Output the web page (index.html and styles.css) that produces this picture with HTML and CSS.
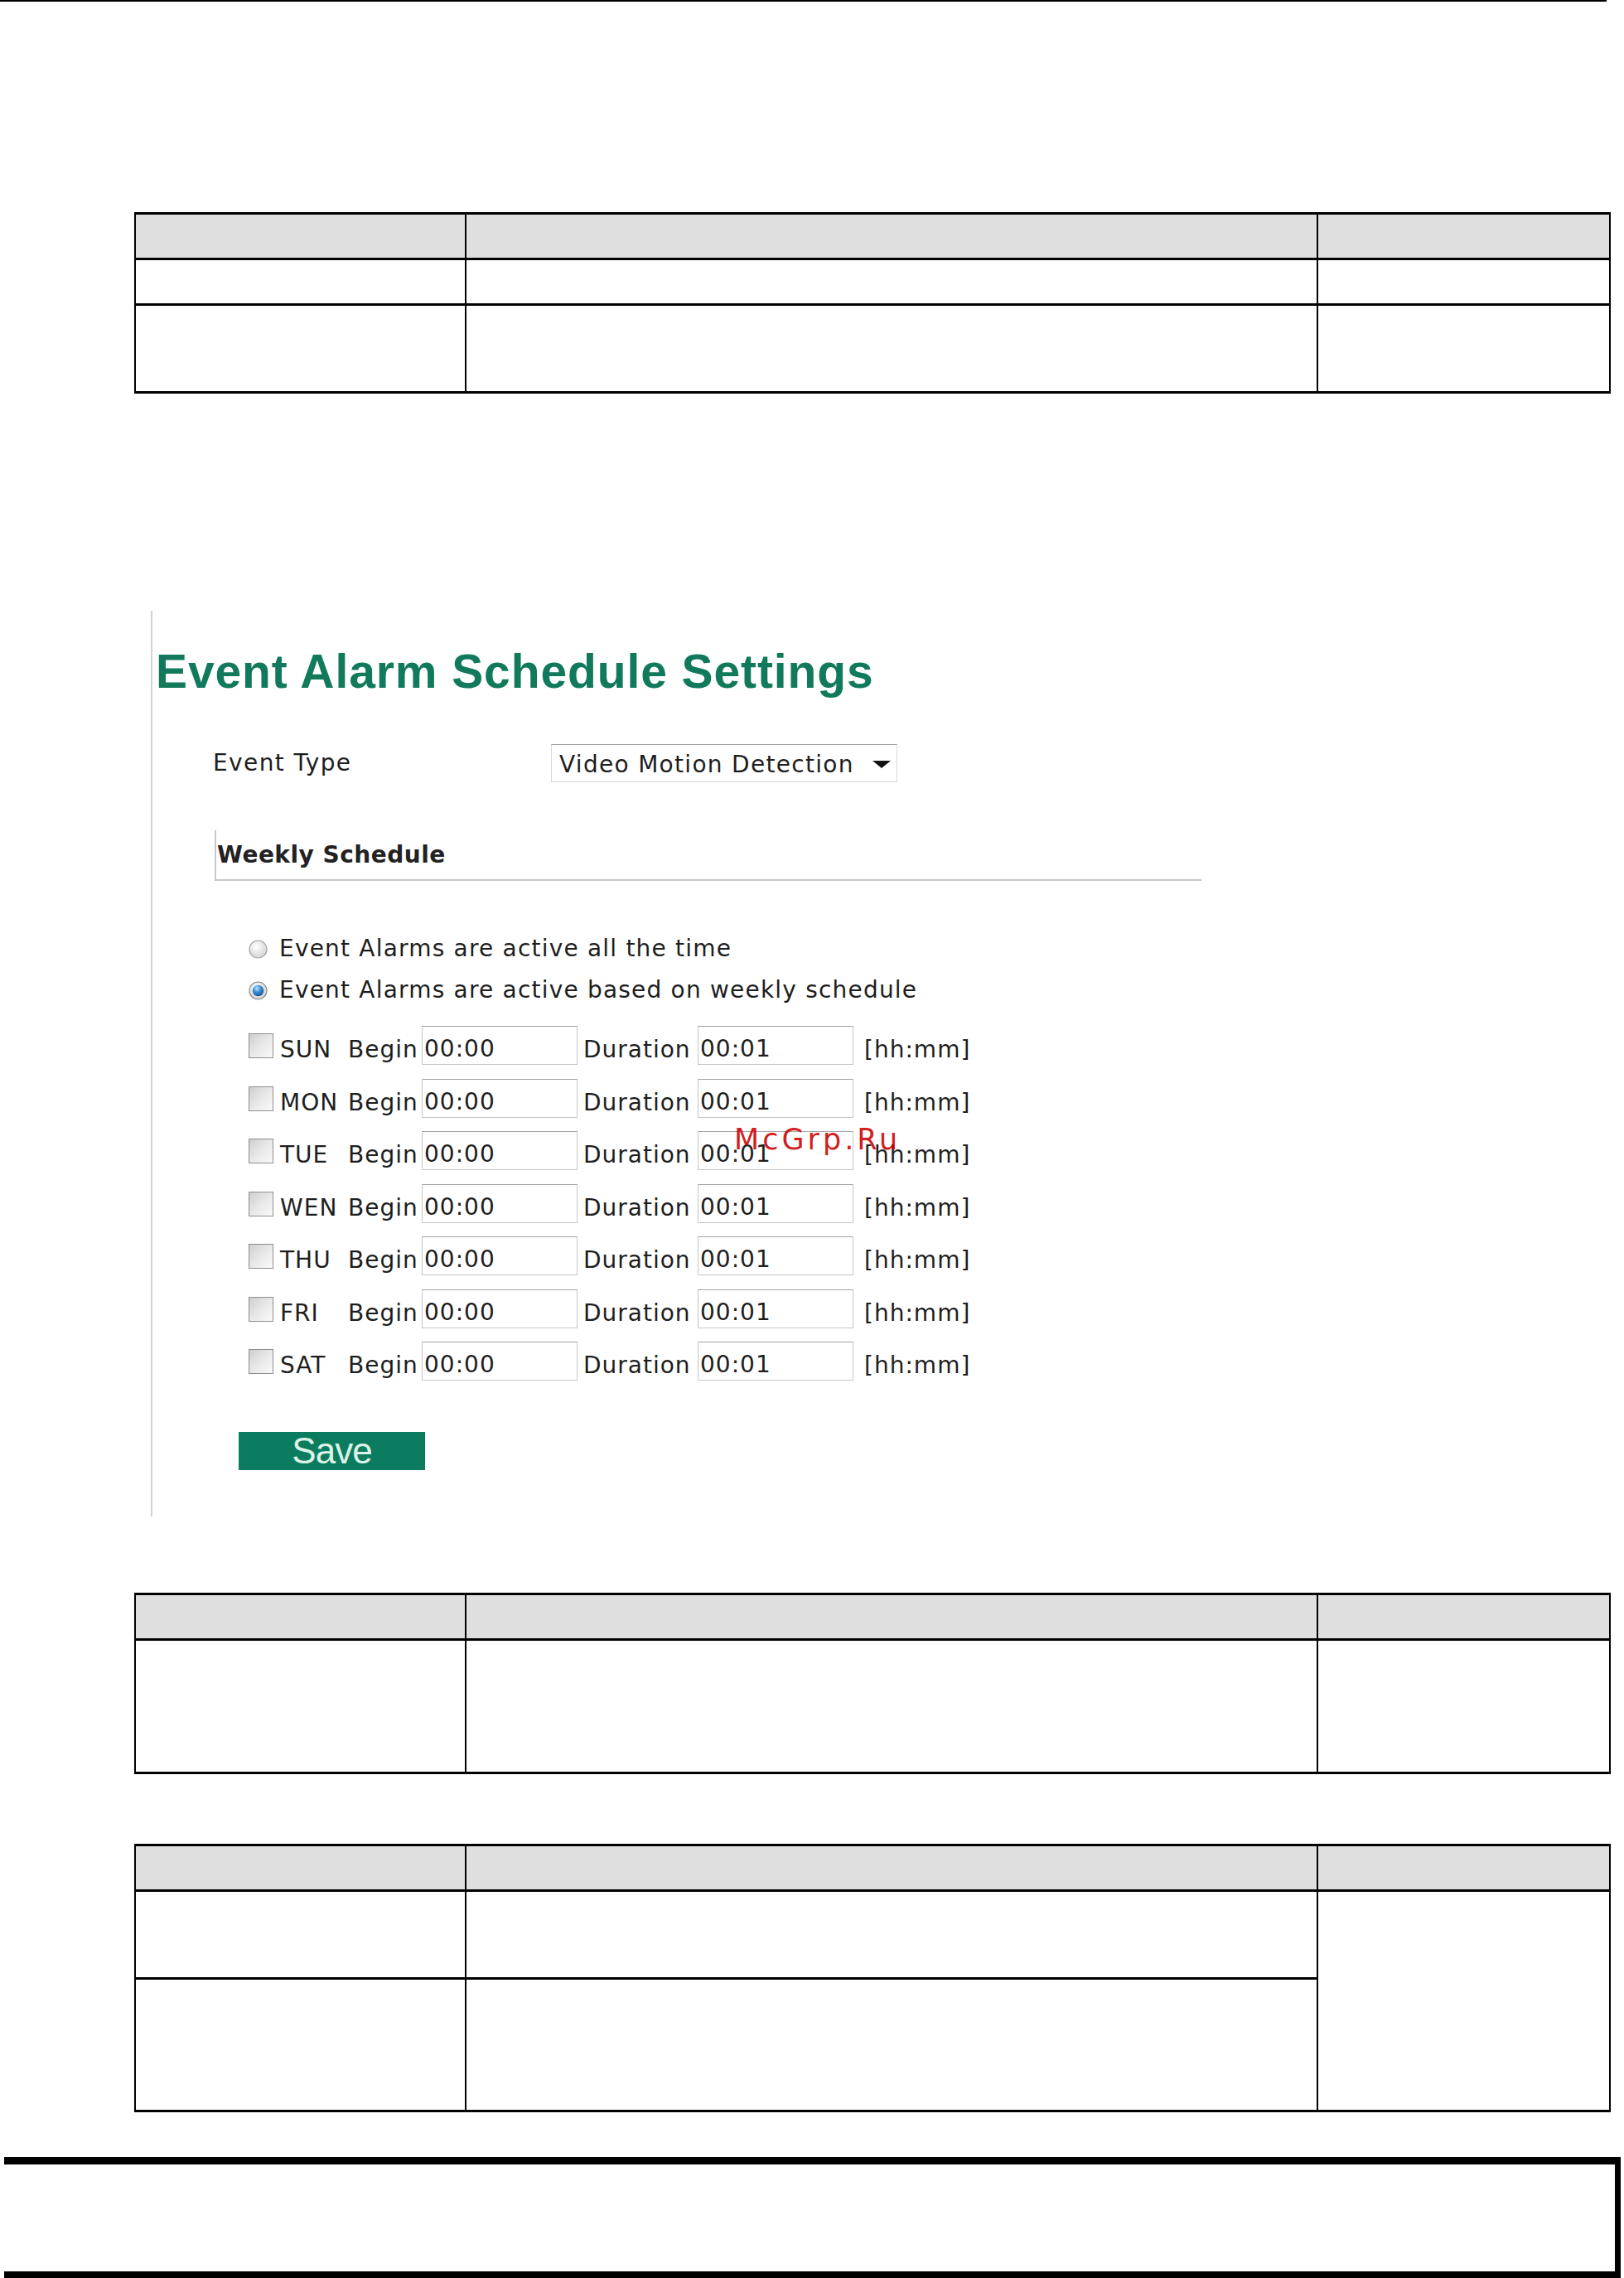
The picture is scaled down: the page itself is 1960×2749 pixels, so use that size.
FILE: index.html
```html
<!DOCTYPE html>
<html lang="en">
<head>
<meta charset="utf-8">
<title>Event Alarm Schedule Settings</title>
<link rel="stylesheet" href="styles.css">
</head>
<body>
<div class="topline"></div>

<div class="tbl t1">
  <div class="cell hd"></div><div class="cell hd"></div><div class="cell hd"></div>
  <div class="cell h52"></div><div class="cell h52"></div><div class="cell h52"></div>
  <div class="cell h103"></div><div class="cell h103"></div><div class="cell h103"></div>
</div>

<section class="shot">
  <h1 class="title">Event Alarm Schedule Settings</h1>

  <div class="evrow">
    <span class="evlabel">Event Type</span>
    <div class="select">Video Motion Detection<span class="arrow"></span></div>
  </div>

  <div class="weekly">Weekly Schedule</div>

  <div class="radios">
    <div class="radio">
      <svg class="rb" width="23" height="23" viewBox="0 0 23 23">
        <defs><radialGradient id="ru" cx="40%" cy="35%" r="70%"><stop offset="0" stop-color="#ffffff"/><stop offset="1" stop-color="#d2d2d2"/></radialGradient></defs>
        <circle cx="11.5" cy="11.5" r="10.5" fill="url(#ru)" stroke="#a4a4a4" stroke-width="1.2"/>
      </svg>
      <span>Event Alarms are active all the time</span>
    </div>
    <div class="radio">
      <svg class="rb" width="23" height="23" viewBox="0 0 23 23">
        <defs>
          <radialGradient id="rc" cx="40%" cy="35%" r="70%"><stop offset="0" stop-color="#ffffff"/><stop offset="1" stop-color="#cfcfcf"/></radialGradient>
          <radialGradient id="rd" cx="40%" cy="30%" r="75%"><stop offset="0" stop-color="#bfe6ff"/><stop offset="0.45" stop-color="#3b8fd6"/><stop offset="1" stop-color="#0d4f93"/></radialGradient>
        </defs>
        <circle cx="11.5" cy="11.5" r="10.5" fill="url(#rc)" stroke="#8c8c8c" stroke-width="1.2"/>
        <circle cx="11.5" cy="11.5" r="6.8" fill="url(#rd)"/>
      </svg>
      <span>Event Alarms are active based on weekly schedule</span>
    </div>
  </div>

  <div class="days">
    <div class="day"><span class="cb"></span><span class="dname">SUN</span><span class="lbl-begin">Begin</span><input class="time" type="text" value="00:00"><span class="lbl-dur">Duration</span><input class="time" type="text" value="00:01"><span class="unit">[hh:mm]</span></div>
    <div class="day"><span class="cb"></span><span class="dname">MON</span><span class="lbl-begin">Begin</span><input class="time" type="text" value="00:00"><span class="lbl-dur">Duration</span><input class="time" type="text" value="00:01"><span class="unit">[hh:mm]</span></div>
    <div class="day"><span class="cb"></span><span class="dname">TUE</span><span class="lbl-begin">Begin</span><input class="time" type="text" value="00:00"><span class="lbl-dur">Duration</span><input class="time" type="text" value="00:01"><span class="unit">[hh:mm]</span></div>
    <div class="day"><span class="cb"></span><span class="dname">WEN</span><span class="lbl-begin">Begin</span><input class="time" type="text" value="00:00"><span class="lbl-dur">Duration</span><input class="time" type="text" value="00:01"><span class="unit">[hh:mm]</span></div>
    <div class="day"><span class="cb"></span><span class="dname">THU</span><span class="lbl-begin">Begin</span><input class="time" type="text" value="00:00"><span class="lbl-dur">Duration</span><input class="time" type="text" value="00:01"><span class="unit">[hh:mm]</span></div>
    <div class="day"><span class="cb"></span><span class="dname">FRI</span><span class="lbl-begin">Begin</span><input class="time" type="text" value="00:00"><span class="lbl-dur">Duration</span><input class="time" type="text" value="00:01"><span class="unit">[hh:mm]</span></div>
    <div class="day"><span class="cb"></span><span class="dname">SAT</span><span class="lbl-begin">Begin</span><input class="time" type="text" value="00:00"><span class="lbl-dur">Duration</span><input class="time" type="text" value="00:01"><span class="unit">[hh:mm]</span></div>
  </div>

  <div class="save">Save</div>

  <div class="watermark">McGrp.Ru</div>
</section>

<div class="tbl t2">
  <div class="cell hd"></div><div class="cell hd"></div><div class="cell hd"></div>
  <div class="cell h158"></div><div class="cell h158"></div><div class="cell h158"></div>
</div>

<div class="tbl t3">
  <div class="cell hd"></div><div class="cell hd"></div><div class="cell hd"></div>
  <div class="cell h103"></div><div class="cell h103"></div><div class="cell span2"></div>
  <div class="cell h157"></div><div class="cell h157"></div>
</div>

<div class="footbox"></div>
</body>
</html>
```

FILE: styles.css
```css
html, body {
  margin: 0;
  padding: 0;
  background: #ffffff;
}
body {
  width: 1960px;
  height: 2749px;
  overflow: hidden;
  font-family: "DejaVu Sans", Verdana, sans-serif;
  color: #1e1e1e;
}

.topline {
  width: 1939px;
  height: 2px;
  background: #000;
}

/* document tables */
.tbl {
  display: grid;
  grid-template-columns: 399px 1028px 353px;
  width: 1780px;
  margin-left: 162px;
  border-top: 3px solid #000;
  border-left: 2px solid #000;
}
.cell {
  border-right: 2px solid #000;
  border-bottom: 3px solid #000;
}
.hd { background: #dfdfdf; height: 52px; }
.h52 { height: 52px; }
.h103 { height: 103px; }
.h157 { height: 157px; }
.h158 { height: 158px; }
.span2 { grid-row: span 2; }

.t1 { margin-top: 254px; }
.t2 { margin-top: 92px; }
.t3 { margin-top: 84px; }

/* screenshot region */
.shot {
  position: relative;
  box-sizing: border-box;
  margin-top: 262px;
  margin-left: 182px;
  padding-top: 45px;
  height: 1093px;
  border-left: 2px solid #d2d2d2;
}

.title {
  margin: 0 0 0 4px;
  font: 700 57px/57px "Liberation Sans", Arial, sans-serif;
  letter-spacing: 0.9px;
  color: #117a5c;
}

.evrow {
  display: flex;
  margin-top: 59px;
  height: 46px;
}
.evlabel {
  margin-left: 73px;
  width: 408px;
  font-size: 28px;
  line-height: 46px;
  letter-spacing: 1.4px;
}
.select {
  position: relative;
  box-sizing: border-box;
  width: 418px;
  height: 46px;
  padding: 3px 0 0 9px;
  border: 1px solid #d8d8d8;
  border-top-color: #9c9c9c;
  font-size: 28px;
  line-height: 42px;
  letter-spacing: 1.3px;
}
.arrow {
  position: absolute;
  right: 7px;
  top: 19px;
  width: 0;
  height: 0;
  border-left: 11px solid transparent;
  border-right: 11px solid transparent;
  border-top: 9px solid #111;
}

.weekly {
  margin-top: 58px;
  margin-left: 75px;
  width: 1188px;
  height: 59px;
  padding-left: 1px;
  box-sizing: content-box;
  border-left: 2px solid #c8c8c8;
  border-bottom: 2px solid #c8c8c8;
  font-size: 28px;
  font-weight: 700;
  line-height: 59px;
  letter-spacing: 0.5px;
  color: #222;
}

.radios {
  margin-top: 57px;
  margin-left: 116px;
}
.radio {
  display: flex;
  align-items: center;
  height: 50px;
  font-size: 28px;
  line-height: 50px;
  letter-spacing: 1.2px;
}
.rb {
  flex: none;
  margin-right: 14px;
}

.days {
  display: flex;
  flex-direction: column;
  gap: 16.5px;
  margin-top: 18px;
  margin-left: 116px;
}
.day {
  display: flex;
  align-items: flex-start;
  height: 47px;
  font-size: 28px;
  letter-spacing: 1px;
}
.cb {
  flex: none;
  box-sizing: border-box;
  width: 30px;
  height: 30px;
  margin-top: 9px;
  border: 1px solid #8e8e8e;
  background: linear-gradient(135deg, #cfcfcf 0%, #e8e8e8 50%, #fafafa 100%);
}
.dname, .lbl-begin, .lbl-dur, .unit {
  flex: none;
  padding-top: 11px;
  line-height: 36px;
  white-space: nowrap;
}
.dname { width: 82px; margin-left: 8px; }
.lbl-begin { width: 89px; }
.lbl-dur { width: 138px; margin-left: 7px; }
.unit { margin-left: 13px; }

.time {
  flex: none;
  box-sizing: border-box;
  width: 188px;
  height: 47px;
  margin: 0;
  padding: 8px 0 0 2px;
  border: 1px solid #c6c6c6;
  border-top-color: #a2a2a2;
  border-radius: 0;
  background: #fff;
  font-family: "DejaVu Sans", Verdana, sans-serif;
  font-size: 28px;
  letter-spacing: 1px;
  color: #1e1e1e;
  outline: none;
}

.save {
  margin-top: 62px;
  margin-left: 104px;
  width: 225px;
  height: 46px;
  background: #0b7c5e;
  color: #dcf2e8;
  font: 44px/46px "Liberation Sans", Arial, sans-serif;
  letter-spacing: -1px;
  text-align: center;
}

.watermark {
  position: absolute;
  left: 702px;
  top: 621px;
  font-size: 35px;
  line-height: 35px;
  letter-spacing: 4px;
  color: rgba(205, 0, 0, 0.9);
}

.footbox {
  box-sizing: border-box;
  margin-top: 54px;
  margin-left: 5px;
  width: 1951px;
  height: 146px;
  border-top: 9px solid #000;
  border-right: 7px solid #000;
  border-bottom: 8px solid #000;
}
```
